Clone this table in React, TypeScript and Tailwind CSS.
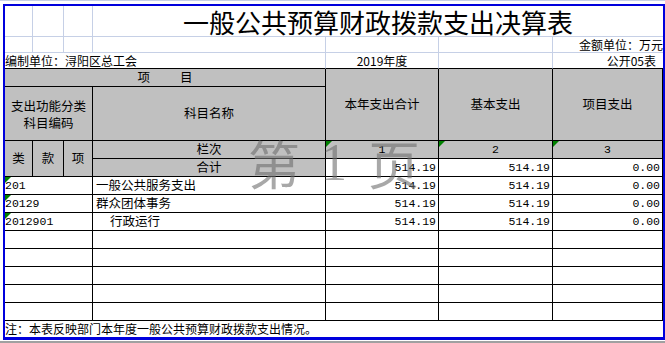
const cjk = "font-['Noto_Sans_CJK_SC',sans-serif]";
const mono = "font-['Liberation_Mono','Noto_Sans_CJK_SC',monospace]";
const lt = "border-[#c6d0e6]";
const cell = "relative flex items-center border-r border-b border-black";
const gray = "bg-[#c0c0c0]";

// green "number stored as text" marker in the cell corner
const Tri = () => (
  <svg className="absolute left-0 top-0" width="6" height="6" viewBox="0 0 6 6">
    <polygon points="0,0 6,0 0,6" fill="#008000" />
  </svg>
);

type Row = {
  r: string;
  code?: string;
  name?: string;
  indent?: boolean;
  values?: string[];
};

const dataRows: Row[] = [
  { r: "row-start-8", code: "201", name: "一般公共服务支出", values: ["514.19", "514.19", "0.00"] },
  { r: "row-start-9", code: "20129", name: "群众团体事务", values: ["514.19", "514.19", "0.00"] },
  { r: "row-start-10", code: "2012901", name: "行政运行", indent: true, values: ["514.19", "514.19", "0.00"] },
  { r: "row-start-11" },
  { r: "row-start-12" },
  { r: "row-start-13" },
  { r: "row-start-14" },
  { r: "row-start-15" },
];

const valueCols = ["col-start-5", "col-start-6", "col-start-7"];

const App = () => {
  return (
    <div className={`relative w-[665px] h-[343px] overflow-hidden bg-white text-black ${cjk}`}>
      <div className={`h-[4px] border-t ${lt}`} />
      <div className="ml-[3px] w-[662px] border-l-2 border-t-2 border-r-2 border-b-[3px] border-[#0000dd]">
        <div className="grid grid-cols-[28px_31px_29px_233px_113px_114px_110px] grid-rows-[31px_16px_16px_18px_54px_18px_18px_repeat(8,18px)_16px]">
          {/* title row */}
          <div className={`col-start-1 row-start-1 border-r border-b ${lt}`} />
          <div className={`col-start-2 row-start-1 border-r border-b ${lt}`} />
          <div className={`col-start-3 row-start-1 border-r border-b ${lt}`} />
          <div className={`col-start-4 col-span-4 row-start-1 flex items-center justify-center pt-[2px] border-b ${lt} text-[26px] leading-none`}>
            一般公共预算财政拨款支出决算表
          </div>

          {/* unit row */}
          <div className={`col-start-1 row-start-2 border-r border-b ${lt}`} />
          <div className={`col-start-2 row-start-2 border-r border-b ${lt}`} />
          <div className={`col-start-3 row-start-2 border-r border-b ${lt}`} />
          <div className={`col-start-4 row-start-2 border-r border-b ${lt}`} />
          <div className={`col-start-5 row-start-2 border-r border-b ${lt}`} />
          <div className={`col-start-6 row-start-2 border-r border-b ${lt}`} />
          <div className={`col-start-7 row-start-2 flex items-end justify-end border-b ${lt} text-[12px] leading-[15px]`}>
            金额单位：万元
          </div>

          {/* org row */}
          <div className={`col-start-1 col-span-4 row-start-3 flex items-end border-r ${lt} border-b border-b-black text-[12px] leading-[15px]`}>
            编制单位：浔阳区总工会
          </div>
          <div className={`col-start-5 row-start-3 flex items-end justify-center border-r ${lt} border-b border-b-black text-[12px] leading-[15px]`}>
            2019年度
          </div>
          <div className={`col-start-6 row-start-3 border-r ${lt} border-b border-b-black`} />
          <div className="col-start-7 row-start-3 flex items-end justify-end pr-[7px] border-b border-black text-[12px] leading-[15px]">
            公开05表
          </div>

          {/* header */}
          <div className={`${cell} ${gray} col-start-1 col-span-4 row-start-4 justify-center gap-[30px] text-[12.5px]`}>
            <span>项</span>
            <span>目</span>
          </div>
          <div className={`${cell} ${gray} col-start-5 row-start-4 row-span-2 justify-center text-[12.5px]`}>本年支出合计</div>
          <div className={`${cell} ${gray} col-start-6 row-start-4 row-span-2 justify-center text-[12.5px]`}>基本支出</div>
          <div className={`${cell} ${gray} col-start-7 row-start-4 row-span-2 justify-center text-[12.5px]`}>项目支出</div>

          <div className={`${cell} ${gray} col-start-1 col-span-3 row-start-5 flex-col justify-center text-[12.5px] leading-[17px]`}>
            <span>支出功能分类</span>
            <span>科目编码</span>
          </div>
          <div className={`${cell} ${gray} col-start-4 row-start-5 justify-center text-[12.5px]`}>科目名称</div>

          <div className={`${cell} ${gray} col-start-1 row-start-6 row-span-2 justify-center text-[12.5px]`}>类</div>
          <div className={`${cell} ${gray} col-start-2 row-start-6 row-span-2 justify-center text-[12.5px]`}>款</div>
          <div className={`${cell} ${gray} col-start-3 row-start-6 row-span-2 justify-center text-[12.5px]`}>项</div>
          <div className={`${cell} ${gray} col-start-4 row-start-6 justify-center text-[12.5px]`}>栏次</div>
          {["1", "2", "3"].map((n, i) => (
            <div key={n} className={`${cell} ${gray} ${valueCols[i]} row-start-6 justify-center ${mono} text-[11.5px]`}>
              <Tri />
              {n}
            </div>
          ))}

          <div className={`${cell} ${gray} col-start-4 row-start-7 justify-center text-[12.5px]`}>合计</div>
          {["514.19", "514.19", "0.00"].map((v, i) => (
            <div key={i} className={`${cell} ${valueCols[i]} row-start-7 justify-end pr-[2px] ${mono} text-[11.5px]`}>
              {v}
            </div>
          ))}

          {/* body */}
          {dataRows.map((row) => (
            <div key={row.r} className="contents">
              <div className={`${cell} col-start-1 col-span-3 ${row.r} ${mono} text-[11.5px]`}>
                {row.code && <Tri />}
                {row.code}
              </div>
              <div className={`${cell} col-start-4 ${row.r} ${row.indent ? "pl-[17px]" : "pl-[3px]"} text-[12.5px]`}>
                {row.name}
              </div>
              {valueCols.map((c, i) => (
                <div key={c} className={`${cell} ${c} ${row.r} justify-end pr-[2px] ${mono} text-[11.5px]`}>
                  {row.values?.[i]}
                </div>
              ))}
            </div>
          ))}

          <div className="col-start-1 col-span-7 row-start-16 flex items-center text-[12px]">
            注：本表反映部门本年度一般公共预算财政拨款支出情况。
          </div>
        </div>
      </div>
      <div className="h-[1px] bg-white" />
      <div className="h-[3px] bg-[#a0a0a0]" />

      {/* page watermark */}
      <div className="pointer-events-none absolute left-[248px] top-[137px] flex items-center gap-[21px] text-[52px] leading-none text-[#6e6e6e]/60">
        <span>第</span>
        <span className="font-['Liberation_Serif',serif]">1</span>
        <span>页</span>
      </div>
    </div>
  );
};

export default App;
